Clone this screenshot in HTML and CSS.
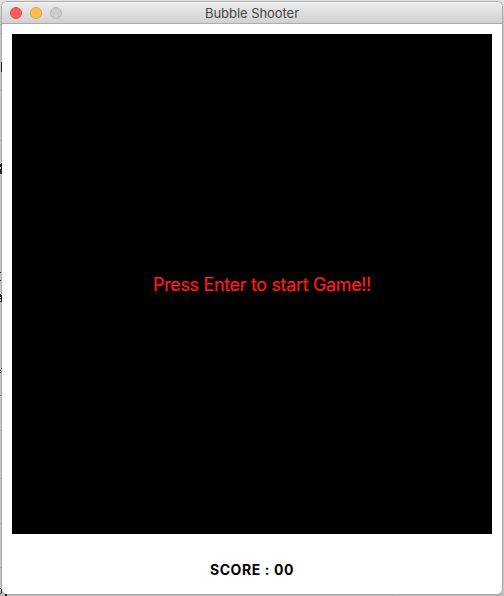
FILE: index.html
```
<!DOCTYPE html>
<html lang="en">
<head>
<meta charset="utf-8">
<title>Bubble Shooter</title>
<link rel="stylesheet" href="styles.css">
</head>
<body>
<svg class="backdrop" width="504" height="596" viewBox="0 0 504 596" aria-hidden="true">
  <path class="rule" d="M0 24.5h2M0 33.5h2M0 90.5h2M0 140.5h2M0 430.5h2M0 478.5h2M0 523.5h2M0 567.5h2M392.5 595v1"/>
  <path class="mark" d="M1 62h1v10h-1zM0 164h1v-1h1v11h-2v-5h1v-2h-1zM0 272h1v1h-1zM0 280h1v1h-1zM0 294h1v1h1v7h-2v-1h1v-2h-1v-1h1v-1h-1zM0 370h1v1h-1zM1 368h1v1h-1zM0 372h1v1h-1zM0 588h1v1h1v4h-1v1h-1v-1h1v-4h-1zM5 594h2v2h-2z"/>
  <path class="link" d="M0 395h1v1h-1z"/>
</svg>
<main class="window">
  <header class="titlebar">
    <div class="controls">
      <span class="control close"></span>
      <span class="control minimize"></span>
      <span class="control zoom"></span>
    </div>
    <h1 class="title">Bubble Shooter</h1>
  </header>
  <section class="board"><p class="prompt">Press Enter to start Game!!</p></section>
  <footer class="score">SCORE : 00</footer>
</main>
</body>
</html>
```

FILE: styles.css
```
* { box-sizing: border-box; }

body {
  margin: 0;
  height: 596px;
  padding: 2px 2px 2px;
  overflow: hidden;
  background: linear-gradient(#e2e2e2, #c7c7c7 20px, #c7c7c7 590px, #b8b8b8);
  font-family: Inter, "Liberation Sans", sans-serif;
}

.backdrop {
  position: absolute;
  inset: 0;
  z-index: 1;
  pointer-events: none;
}

.rule { stroke: #a9a9a9; fill: none; }
.mark { fill: #222; }
.link { fill: #6864b4; }

.window {
  position: relative;
  display: flex;
  flex-direction: column;
  width: 500px;
  height: 592px;
  border-radius: 5px;
  background: #fff;
  box-shadow: 0 0 0 1px #acacac;
}

.titlebar {
  display: grid;
  grid-template-columns: 60px 1fr 60px;
  align-items: center;
  flex: none;
  height: 22px;
  padding: 0 8px;
  border-bottom: 1px solid #acacac;
  border-radius: 5px 5px 0 0;
  background: linear-gradient(#ececec, #d1d1d1);
  box-shadow: inset 0 1px #f5f5f5;
}

.controls { display: flex; gap: 8px; }

.control {
  width: 12px;
  height: 12px;
  border: 1px solid;
  border-radius: 50%;
}

.close { background: #ff5b5c; border-color: #e24b4b; }
.minimize { background: #ffbd4c; border-color: #e0a03c; }
.zoom { background: #cdcdcd; border-color: #b5b5b5; }

.title {
  margin: 0;
  padding-top: 1px;
  color: #464646;
  font-size: 13px;
  line-height: 20px;
  font-weight: 400;
  letter-spacing: -0.05px;
  text-align: center;
  white-space: nowrap;
}

.board {
  display: flex;
  align-items: center;
  justify-content: center;
  flex: none;
  height: 500px;
  margin: 10px 10px 0;
  background: #000;
}

.prompt {
  margin: 2px 0 0 20px;
  color: #ff1c17;
  font-size: 18px;
  line-height: 22px;
  letter-spacing: -0.35px;
  white-space: nowrap;
  -webkit-text-stroke: 0.2px #ff1c17;
}

.score {
  margin-top: 26px;
  color: #000;
  font-size: 14px;
  line-height: 20px;
  font-weight: 700;
  letter-spacing: 0.6px;
  text-align: center;
}
```
